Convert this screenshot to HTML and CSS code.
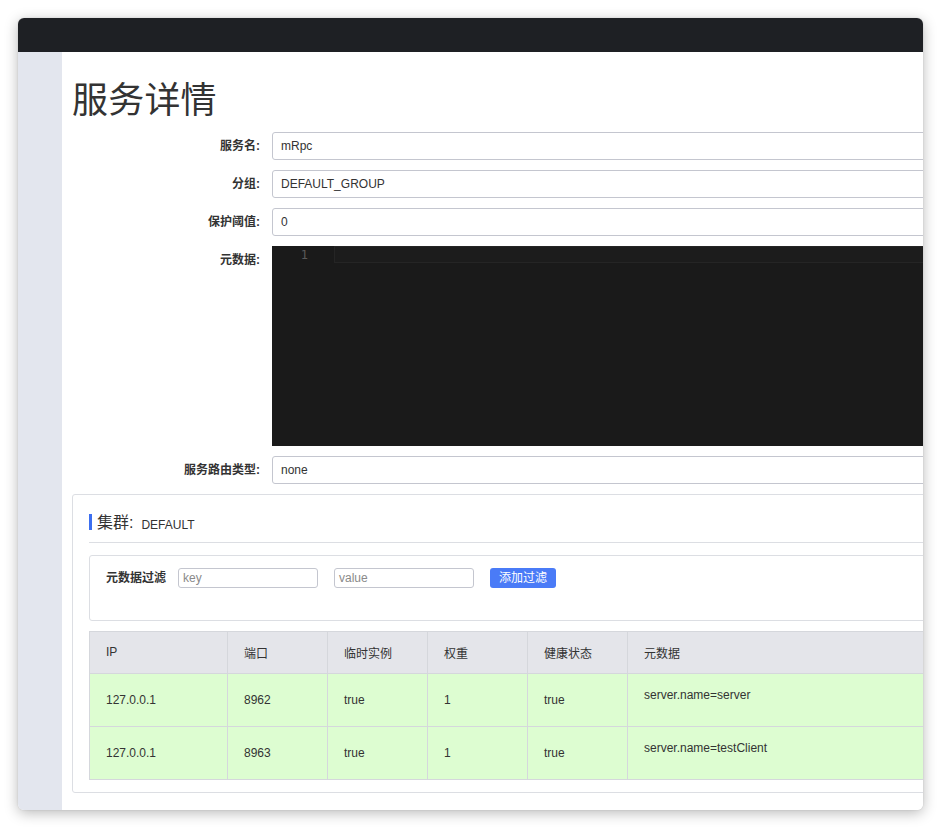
FILE: index.html
```html
<!DOCTYPE html>
<html lang="zh-CN">
<head>
<meta charset="utf-8">
<title>服务详情</title>
<link rel="stylesheet" href="styles.css">
</head>
<body>
<div class="window">
  <div class="topbar"></div>
  <div class="body">
    <aside class="sidebar"></aside>
    <main class="main">
      <h1 class="page-title">服务详情</h1>
      <div class="form">
        <div class="form-row">
          <label class="form-label">服务名:</label>
          <div class="input">mRpc</div>
        </div>
        <div class="form-row">
          <label class="form-label">分组:</label>
          <div class="input">DEFAULT_GROUP</div>
        </div>
        <div class="form-row">
          <label class="form-label">保护阈值:</label>
          <div class="input">0</div>
        </div>
        <div class="form-row">
          <label class="form-label">元数据:</label>
          <div class="editor">
            <div class="gutter"><span class="line-no">1</span></div>
            <div class="code"><div class="active-line"></div></div>
          </div>
        </div>
        <div class="form-row">
          <label class="form-label">服务路由类型:</label>
          <div class="input">none</div>
        </div>
      </div>

      <section class="cluster">
        <div class="cluster-head">
          <span class="cluster-bar"></span>
          <span class="cluster-title">集群:</span>
          <span class="cluster-name">DEFAULT</span>
        </div>
        <div class="filter">
          <span class="filter-label">元数据过滤</span>
          <span class="small-input placeholder">key</span>
          <span class="small-input placeholder">value</span>
          <span class="btn">添加过滤</span>
        </div>
        <table class="table">
          <colgroup>
            <col class="c1"><col class="c2"><col class="c3"><col class="c4"><col class="c5"><col class="c6">
          </colgroup>
          <thead>
            <tr><th>IP</th><th>端口</th><th>临时实例</th><th>权重</th><th>健康状态</th><th>元数据</th></tr>
          </thead>
          <tbody>
            <tr><td>127.0.0.1</td><td>8962</td><td>true</td><td>1</td><td>true</td><td class="meta">server.name=server</td></tr>
            <tr><td>127.0.0.1</td><td>8963</td><td>true</td><td>1</td><td>true</td><td class="meta">server.name=testClient</td></tr>
          </tbody>
        </table>
      </section>
    </main>
  </div>
</div>
</body>
</html>
```
FILE: styles.css
```css
* { box-sizing: border-box; }
html, body { margin: 0; padding: 0; background: #ffffff; }
body {
  font-family: "Liberation Sans", "Noto Sans CJK SC", sans-serif;
  color: #333;
  font-size: 12px;
  padding: 18px 0 0 18px;
  width: 941px;
  height: 828px;
  overflow: hidden;
}
.window {
  width: 905px;
  height: 792px;
  border-radius: 6px;
  overflow: hidden;
  background: #fff;
  box-shadow: 0 3px 14px rgba(0,0,0,0.28), 0 0 2px rgba(0,0,0,0.12);
  display: flex;
  flex-direction: column;
}
.topbar { height: 34px; background: #1e2024; flex: 0 0 auto; }
.body { flex: 1; display: flex; min-height: 0; }
.sidebar { width: 44px; flex: 0 0 44px; background: #e3e6ee; }
.main {
  flex: 0 0 1100px;
  width: 1100px;
  padding: 0 0 0 10px;
  background: #fff;
}
.page-title {
  margin: 28px 0 0 0;
  font-size: 36px;
  line-height: 42px;
  font-weight: normal;
  color: #333;
  letter-spacing: 0.2px;
}
.form { margin-top: 10px; display: flex; flex-direction: column; gap: 10px; }
.form-row { display: flex; align-items: flex-start; gap: 12px; }
.form-label {
  width: 188px;
  flex: 0 0 188px;
  text-align: right;
  font-weight: bold;
  font-size: 12px;
  line-height: 28px;
  color: #333;
}
.input {
  flex: 1;
  height: 28px;
  border: 1px solid #c4c6cf;
  border-radius: 3px;
  padding: 0 8px;
  line-height: 26px;
  font-size: 12px;
  color: #333;
}
.editor {
  flex: 1;
  height: 200px;
  background: #1a1a1a;
  display: flex;
}
.gutter {
  width: 62px;
  flex: 0 0 62px;
  text-align: right;
  padding-right: 26px;
  padding-top: 1px;
  font-family: "DejaVu Sans Mono", monospace;
  font-size: 12px;
  line-height: 17px;
  color: #595959;
}
.code { flex: 1; }
.active-line {
  height: 17px;
  border: 1px solid #252525;
  background: #1c1c1c;
}
.cluster {
  margin-top: 10px;
  border: 1px solid #dcdee3;
  border-radius: 3px;
  padding: 19px 16px 12px 16px;
}
.cluster-head {
  display: flex;
  align-items: flex-start;
  height: 29px;
  border-bottom: 1px solid #dcdee3;
}
.cluster-bar { width: 3px; height: 16px; background: #3d6ff0; margin-right: 5px; }
.cluster-title { font-size: 16px; line-height: 18px; color: #333; margin-right: 8px; }
.cluster-name { font-size: 12px; line-height: 18px; color: #333; position: relative; top: 2px; }
.filter {
  margin-top: 12px;
  border: 1px solid #dcdee3;
  border-radius: 3px;
  height: 66px;
  padding: 12px 16px;
  display: flex;
  align-items: flex-start;
}
.filter-label { font-weight: bold; font-size: 12px; line-height: 20px; width: 72px; flex: 0 0 72px; color: #333; }
.small-input {
  width: 140px;
  height: 20px;
  border: 1px solid #c4c6cf;
  border-radius: 3px;
  padding: 0 4px;
  line-height: 18px;
  font-size: 12px;
  margin-right: 16px;
}
.placeholder { color: #8a8a8a; }
.btn {
  width: 66px;
  height: 20px;
  background: #4a7bf7;
  border-radius: 3px;
  color: #fff;
  font-size: 12px;
  line-height: 20px;
  text-align: center;
}
.table {
  margin-top: 10px;
  border-collapse: collapse;
  table-layout: fixed;
  width: 1200px;
}
.c1 { width: 138px; }
.c2, .c3, .c4, .c5 { width: 100px; }
.table th, .table td {
  border: 1px solid #d5d7dc;
  text-align: left;
  padding: 0 16px;
  font-size: 12px;
  color: #333;
  font-weight: normal;
}
.table th { height: 42px; background: #e4e5ea; padding-bottom: 1px; }
.table td { height: 53px; background: #ddfdd1; vertical-align: middle; }
.table td.meta { vertical-align: top; padding-top: 14px; }
```
